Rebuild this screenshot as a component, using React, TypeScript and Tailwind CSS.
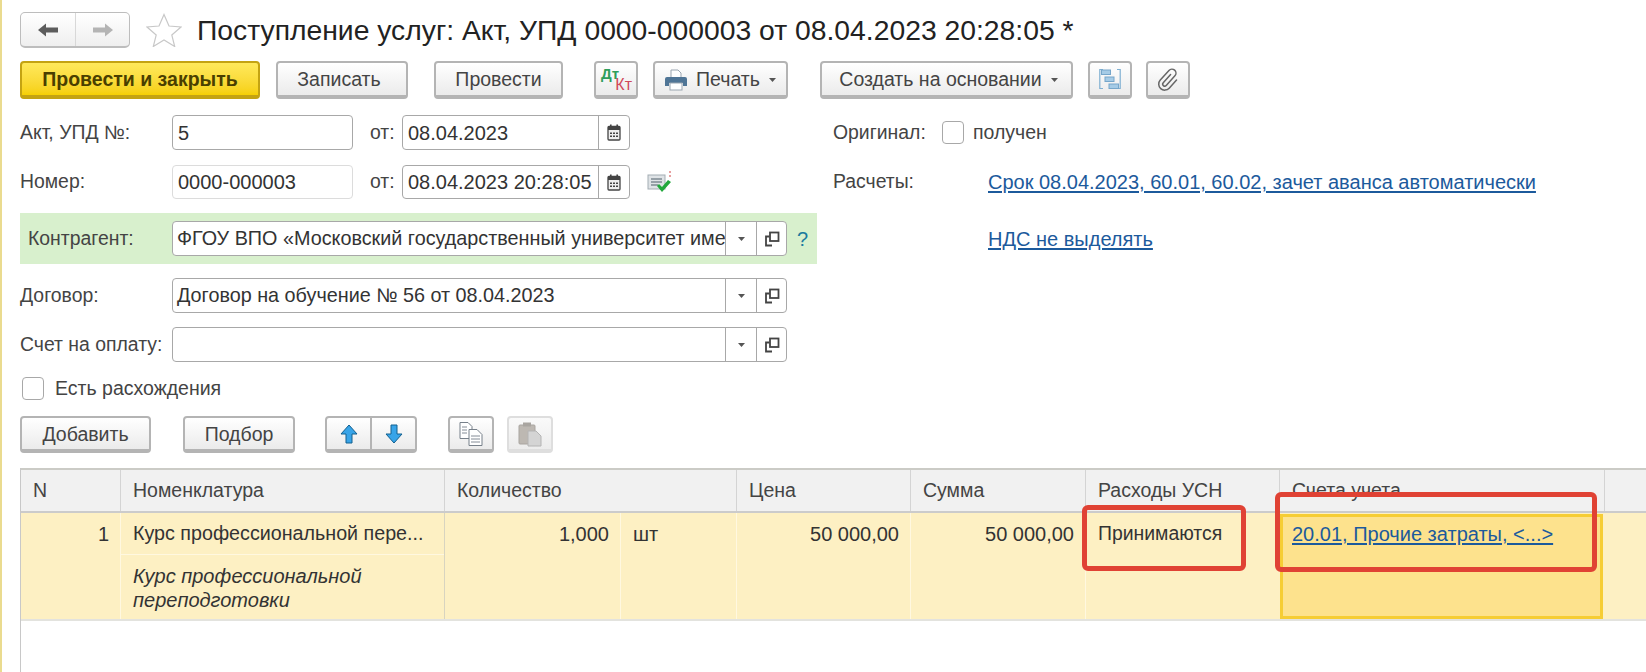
import React from "react";

function Btn({ w, children, disabled, primary, h }: { w: string; children: React.ReactNode; disabled?: boolean; primary?: boolean; h?: string }) {
  const base = "flex items-center justify-center rounded-[4px] border-x-2 border-t-2 border-b-[4px] text-[19.5px] shrink-0 " + (h ?? "h-[38px]") + " ";
  const tone = primary
    ? "border-[#c4a312] bg-linear-to-b from-[#ffe95a] to-[#f6d000] font-bold text-[#4a3f00]"
    : disabled
      ? "border-[#dedede] bg-linear-to-b from-[#fafafa] to-[#ececec] text-[#aaa]"
      : "border-[#b4b4b4] bg-linear-to-b from-white to-[#ebebeb] text-[#444]";
  return <div className={base + tone + " " + w}>{children}</div>;
}

const Caret = () => (
  <svg width="9" height="6" viewBox="0 0 9 6" className="shrink-0"><path d="M1 1h7L4.500 5z" fill="#555" /></svg>
);

const Restore = () => (
  <svg width="16" height="16" viewBox="0 0 16 16" className="shrink-0" fill="none" stroke="#444" strokeWidth="1.800">
    <rect x="6" y="1.500" width="8.500" height="8.500" />
    <path d="M5.500 5.500H2V14.500H8" />
  </svg>
);

const Calendar = () => (
  <svg width="14" height="17" viewBox="0 0 14 17" className="shrink-0">
    <rect x="1" y="2.500" width="12" height="13.500" rx="1" fill="#eee" stroke="#444" strokeWidth="1.300" />
    <rect x="1" y="2.500" width="12" height="3.500" fill="#444" />
    <rect x="3" y="0.500" width="1.600" height="3" fill="#444" />
    <rect x="9.400" y="0.500" width="1.600" height="3" fill="#444" />
    <path d="M3 8.500h2v1.600H3zM6 8.500h2v1.600H6zM9 8.500h2v1.600H9zM3 11.500h2v1.600H3zM6 11.500h2v1.600H6zM9 11.500h2v1.600H9z" fill="#444" />
  </svg>
);

function Field({ w, children, tone }: { w: string; children?: React.ReactNode; tone?: string }) {
  return (
    <div className={"flex items-center rounded-[4px] border bg-white pl-[5px] text-[20px] text-[#333] shrink-0 overflow-hidden whitespace-nowrap " + (tone ?? "border-[#a8a8a8]") + " " + w}>
      {children}
    </div>
  );
}

function DateField({ value }: { value: string }) {
  return (
    <div className="flex h-full w-[228px] shrink-0 items-stretch rounded-[4px] border border-[#a8a8a8] bg-white text-[20px]">
      <div className="flex flex-1 items-center overflow-hidden pl-[5px] whitespace-nowrap">{value}</div>
      <div className="flex w-[31px] shrink-0 items-center justify-center border-l border-[#a8a8a8]"><Calendar /></div>
    </div>
  );
}

function Select({ value }: { value?: string }) {
  return (
    <div className="flex h-full w-[615px] shrink-0 items-stretch rounded-[4px] border border-[#a8a8a8] bg-white text-[19.8px]">
      <div className="flex-1 self-center overflow-hidden pl-[4px] whitespace-nowrap">{value}</div>
      <div className="flex w-[31px] shrink-0 items-center justify-center border-l border-[#a8a8a8]"><Caret /></div>
      <div className="flex w-[30px] shrink-0 items-center justify-center border-l border-[#a8a8a8]"><Restore /></div>
    </div>
  );
}

const Label = ({ children }: { children: React.ReactNode }) => (
  <div className="flex w-[152px] shrink-0 items-center whitespace-nowrap text-[19.4px] text-[#444]">{children}</div>
);

const Check = () => <div className="h-[23px] w-[22px] shrink-0 rounded-[4px] border border-[#a8a8a8] bg-white" />;

const Th = ({ w, children, last }: { w: string; children?: React.ReactNode; last?: boolean }) => (
  <div className={"flex items-center pl-[12px] text-[19.5px] text-[#444] " + (last ? "flex-1 " : "shrink-0 border-r border-[#d4d4d4] ") + w}>{children}</div>
);

const LinkText = ({ children }: { children: React.ReactNode }) => (
  <span className="text-[20px] whitespace-nowrap text-[#1c5a9c] underline underline-offset-2">{children}</span>
);

export default function App() {
  return (
    <div className="relative h-[672px] w-[1646px] overflow-hidden border-l-2 border-[#eadb8f] bg-white pl-[18px] font-['Liberation_Sans','Arial',sans-serif] text-[#333]">
      {/* Navigation and title */}
      <div className="mt-[12px] flex h-[36px] items-center">
        <div className="flex h-[36px] w-[110px] shrink-0 rounded-[5px] border border-[#bdbdbd] border-b-2 bg-linear-to-b from-white to-[#efefef]">
          <div className="flex w-[55px] items-center justify-center border-r border-[#d8d8d8]">
            <svg width="22" height="16" viewBox="0 0 22 16"><path d="M9 1.500 1 8l8 6.500V10.500h12v-5H9z" fill="#5c5c5c" /></svg>
          </div>
          <div className="flex flex-1 items-center justify-center">
            <svg width="22" height="16" viewBox="0 0 22 16"><path d="M13 1.500 21 8l-8 6.500V10.500H1v-5h12z" fill="#b4b4b4" /></svg>
          </div>
        </div>
        <svg width="36" height="34" viewBox="0 0 36 34" className="ml-[16px] shrink-0">
          <path d="M18 1.500l5 11.500 12 1-9.200 8 2.900 11.500L18 27l-10.700 6.500L10.200 22 1 14l12-1z" fill="#fff" stroke="#c8c8c8" strokeWidth="1.200" />
        </svg>
        <h1 className="ml-[15px] whitespace-nowrap text-[28.3px] font-normal text-[#222]">Поступление услуг: Акт, УПД 0000-000003 от 08.04.2023 20:28:05 *</h1>
      </div>

      {/* Command bar */}
      <div className="mt-[13px] flex items-center">
        <Btn w="w-[240px] pt-[2px]" primary>Провести и закрыть</Btn>
        <Btn w="w-[132px] ml-[16px] pt-[2px] pr-[6px]">Записать</Btn>
        <Btn w="w-[129px] ml-[26px] pt-[2px]">Провести</Btn>
        <Btn w="w-[44px] ml-[31px]">
          <div className="relative h-[28px] w-[32px] text-[16px] leading-none">
            <span className="absolute left-[1px] top-[1px] text-[15px] font-bold text-[#2f9e5c]">Дт</span>
            <span className="absolute right-[0px] bottom-[0px] text-[#d0485a]">Кт</span>
          </div>
        </Btn>
        <Btn w="w-[135px] ml-[15px] gap-[8px] pt-[2px]">
          <svg width="24" height="24" viewBox="0 0 24 24" className="shrink-0">
            <path d="M7 10V2h7l3 3v5z" fill="#fff" stroke="#9aa5b0" />
            <path d="M3 9h18a2 2 0 0 1 2 2v7h-4v-3H5v3H1v-7a2 2 0 0 1 2-2z" fill="#4f7596" />
            <rect x="6" y="15" width="12" height="7" fill="#fff" stroke="#9aa5b0" />
          </svg>
          <span>Печать</span>
          <Caret />
        </Btn>
        <Btn w="w-[253px] ml-[32px] gap-[8px] pt-[2px] pl-[5px]">
          <span>Создать на основании</span>
          <Caret />
        </Btn>
        <Btn w="w-[44px] ml-[15px]">
          <svg width="22" height="22" viewBox="0 0 22 22" fill="none">
            <path d="M4 1.500H.8v19H4M18 1.500h3.200v19H18" stroke="#7fb0d2" strokeWidth="1.200" />
            <rect x="2.500" y="2" width="9" height="4.500" fill="#a5cbe6" stroke="#76a6ca" />
            <rect x="6" y="9" width="9" height="4.500" fill="#a5cbe6" stroke="#76a6ca" />
            <rect x="10" y="16" width="9.500" height="4.500" fill="#a5cbe6" stroke="#76a6ca" />
          </svg>
        </Btn>
        <Btn w="w-[44px] ml-[14px]">
          <svg width="26" height="26" viewBox="0 0 26 26" fill="none" stroke="#666" strokeWidth="1.500" strokeLinecap="round">
            <g transform="rotate(42 13 13)">
              <path d="M12 8v11a2 2 0 0 0 4 0V6a4 4 0 0 0-8 0v13a6 6 0 0 0 12 0V8" />
            </g>
          </svg>
        </Btn>
      </div>

      {/* Form */}
      <div className="mt-[16px] flex">
        <div className="flex w-[813px] shrink-0 flex-col">
          <div className="flex h-[35px]">
            <Label>Акт, УПД №:</Label>
            <Field w="w-[181px]">5</Field>
            <div className="ml-[17px] flex w-[32px] items-center text-[19.4px] text-[#444]">от:</div>
            <DateField value="08.04.2023" />
          </div>
          <div className="mt-[15px] flex h-[34px]">
            <Label>Номер:</Label>
            <Field w="w-[181px]" tone="border-[#dcdcdc]">0000-000003</Field>
            <div className="ml-[17px] flex w-[32px] items-center text-[19.4px] text-[#444]">от:</div>
            <DateField value="08.04.2023 20:28:05" />
            <svg width="26" height="24" viewBox="0 0 26 24" className="ml-[17px] self-center shrink-0">
              <rect x="1" y="5" width="17" height="14" fill="#dfe3e6" stroke="#a4adb3" />
              <path d="M4 9h11M4 12h11M4 15h7" stroke="#7f8a92" strokeWidth="1.300" />
              <path d="M10 16l2-2 3 3 6-7 3 2-9 10z" fill="#22a83c" />
              <path d="M23 1v7" stroke="#d04040" strokeDasharray="2 2" />
            </svg>
          </div>
          <div className="mt-[14px] flex h-[51px] w-[797px] items-center bg-[#d8f0cd] pl-[8px]">
            <div className="flex h-[35px] w-[144px] shrink-0 items-center text-[19.4px] text-[#444]">Контрагент:</div>
            <div className="h-[35px]"><Select value="ФГОУ ВПО «Московский государственный университет име" /></div>
            <span className="ml-[10px] text-[20px] text-[#1b7a9e]">?</span>
          </div>
          <div className="mt-[14px] flex h-[35px]">
            <Label>Договор:</Label>
            <Select value="Договор на обучение № 56 от 08.04.2023" />
          </div>
          <div className="mt-[14px] flex h-[35px]">
            <Label>Счет на оплату:</Label>
            <Select />
          </div>
          <div className="mt-[15px] flex h-[23px] items-center pl-[2px]">
            <Check />
            <span className="ml-[11px] text-[19.5px] text-[#444]">Есть расхождения</span>
          </div>
        </div>

        <div className="flex flex-col">
          <div className="flex h-[35px] items-center">
            <span className="w-[109px] shrink-0 text-[19.4px] text-[#444]">Оригинал:</span>
            <Check />
            <span className="ml-[9px] text-[19.5px] text-[#444]">получен</span>
          </div>
          <div className="mt-[15px] flex h-[34px] items-center">
            <span className="w-[155px] shrink-0 text-[19.4px] text-[#444]">Расчеты:</span>
            <LinkText>Срок 08.04.2023, 60.01, 60.02, зачет аванса автоматически</LinkText>
          </div>
          <div className="mt-[14px] flex h-[51px] items-center pl-[155px]">
            <LinkText>НДС не выделять</LinkText>
          </div>
        </div>
      </div>

      {/* Table toolbar */}
      <div className="mt-[16px] flex items-center">
        <Btn w="w-[131px] pt-[2px]" h="h-[37px]">Добавить</Btn>
        <Btn w="w-[112px] ml-[32px] pt-[2px]" h="h-[37px]">Подбор</Btn>
        <div className="ml-[30px] flex h-[37px] w-[92px] shrink-0 rounded-[4px] border-x-2 border-t-2 border-b-[4px] border-[#b4b4b4] bg-linear-to-b from-white to-[#ebebeb]">
          <div className="flex w-[45px] items-center justify-center border-r-2 border-[#b4b4b4]">
            <svg width="18" height="20" viewBox="0 0 18 20"><path d="M9 1 1 10h5v9h6v-9h5z" fill="#38a4e8" stroke="#12608f" /></svg>
          </div>
          <div className="flex flex-1 items-center justify-center">
            <svg width="18" height="20" viewBox="0 0 18 20"><path d="M9 19 1 10h5V1h6v9h5z" fill="#38a4e8" stroke="#12608f" /></svg>
          </div>
        </div>
        <Btn w="w-[46px] ml-[31px]" h="h-[37px]">
          <svg width="26" height="26" viewBox="0 0 26 26" fill="#fff" stroke="#77808a">
            <path d="M2 1.500h8l4 4v12H2z" />
            <path d="M11 8.500h8l5 5v11H11z" />
            <path d="M4 6h5M4 9h5M4 12h5M13 15h9M13 18h9M13 21h9" strokeWidth=".9" />
          </svg>
        </Btn>
        <Btn w="w-[46px] ml-[13px]" disabled h="h-[37px]">
          <svg width="26" height="26" viewBox="0 0 26 26">
            <rect x="2" y="4" width="16" height="19" rx="1" fill="#bdb8b2" stroke="#a9a5a0" />
            <rect x="6" y="1.500" width="8" height="4" fill="#a9a5a0" />
            <path d="M11 10h8l5 5v10H11z" fill="#d4d4d4" stroke="#b4b4b4" />
          </svg>
        </Btn>
      </div>

      {/* Table */}
      <div className="mt-[15px] h-[204px] border-l border-[#c8c8c8] text-[20px]">
        <div className="flex h-[45px] border-y-2 border-t-[#cbcbc6] border-b-[#cbcbcb] bg-[#f1f1f1]">
          <Th w="w-[100px]">N</Th>
          <Th w="w-[324px]">Номенклатура</Th>
          <Th w="w-[292px]">Количество</Th>
          <Th w="w-[174px]">Цена</Th>
          <Th w="w-[175px]">Сумма</Th>
          <Th w="w-[194px]">Расходы УСН</Th>
          <Th w="w-[325px]">Счета учета</Th>
          <Th w="" last />
        </div>
        <div className="flex h-[108px] border-b-2 border-[#e3e3de] bg-[#fdf0c3] text-[#333]">
          <div className="w-[100px] shrink-0 border-r border-[#fff8e0] pr-[11px] pt-[6px] text-right">1</div>
          <div className="flex w-[324px] shrink-0 flex-col border-r border-[#d8d4c0]">
            <div className="h-[42px] border-b border-[#fff8e0] pl-[12px] pt-[6px] text-[19.7px] whitespace-nowrap">Курс профессиональной пере...</div>
            <div className="pl-[12px] pt-[9px] italic leading-[24px]">Курс профессиональной<br />переподготовки</div>
          </div>
          <div className="w-[176px] shrink-0 border-r border-[#fff8e0] pr-[11px] pt-[6px] text-right">1,000</div>
          <div className="w-[116px] shrink-0 border-r border-[#fff8e0] pl-[12px] pt-[6px]">шт</div>
          <div className="w-[174px] shrink-0 border-r border-[#fff8e0] pr-[11px] pt-[6px] text-right">50 000,00</div>
          <div className="w-[175px] shrink-0 border-r border-[#fff8e0] pr-[11px] pt-[6px] text-right">50 000,00</div>
          <div className="w-[194px] shrink-0 pl-[12px] pt-[6px] text-[19.4px]">Принимаются</div>
          <div className="mt-[1px] w-[323px] shrink-0 border-[3px] border-[#f6cd34] bg-[#fde28d] pl-[9px] pt-[2px]">
            <span className="whitespace-nowrap text-[#1c5a9c] underline underline-offset-2">20.01, Прочие затраты, &lt;...&gt;</span>
          </div>
          <div className="flex-1" />
        </div>
      </div>

      {/* Red annotation frames */}
      <div className="absolute left-[1080px] top-[505px] h-[66px] w-[164px] rounded-[6px] border-[5px] border-[#e04234]" />
      <div className="absolute left-[1273px] top-[492px] h-[80px] w-[322px] rounded-[6px] border-[5px] border-[#e04234]" />
    </div>
  );
}
